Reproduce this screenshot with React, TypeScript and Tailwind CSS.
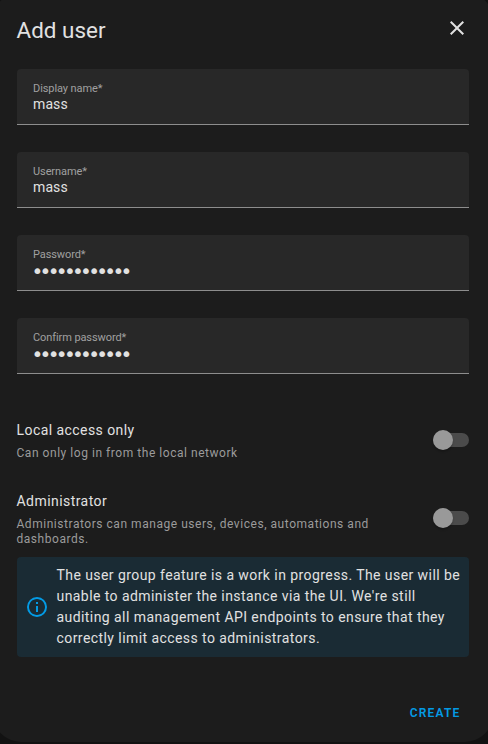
type FieldProps = { label: string; value: string; type?: "text" | "password" };

function Field({ label, value, type = "text" }: FieldProps) {
  const face =
    type === "password"
      ? "mt-px -ml-[1.5px] font-['DejaVu_Sans',sans-serif] text-[20px] tracking-[-3.7px]"
      : "text-sm tracking-[0.1px]";
  return (
    <label className="flex h-14 flex-col rounded-t border-b border-[#8d8d8d] bg-[#282828] px-4 pt-3">
      <span className="h-[15px] text-[11px] leading-[15px] tracking-[-0.09px] text-[#a0a0a0]">{label}</span>
      <input
        type={type}
        defaultValue={value}
        className={`h-4 w-full bg-transparent p-0 leading-4 text-[#e1e1e1] outline-none ${face}`}
      />
    </label>
  );
}

function Toggle() {
  return (
    <button type="button" role="switch" aria-checked="false" className="flex h-5 w-9 shrink-0 items-center">
      <span className="flex h-3.5 w-9 items-center rounded-full bg-[#4b4b4b]">
        <span className="size-5 shrink-0 rounded-full bg-[#999999] shadow-[0_2px_2px_rgba(0,0,0,0.2)]" />
      </span>
    </button>
  );
}

type RowProps = { title: string; text: string };

function SettingRow({ title, text }: RowProps) {
  return (
    <div className="flex items-center justify-between">
      <div className="-ml-[0.5px] w-[376px]">
        <div className="text-sm leading-5 tracking-[0.44px] text-[#e1e1e1]">{title}</div>
        <div className="mt-1.5 -mb-0.5 text-xs leading-[15px] tracking-[0.54px] text-[#9b9b9b]">{text}</div>
      </div>
      <Toggle />
    </div>
  );
}

export default function App() {
  return (
    <div className="h-[744px] w-[488px] overflow-hidden bg-[#121212] font-['Roboto','Liberation_Sans',sans-serif]">
      <main className="-mr-[5px] -ml-[7px] -mt-2 flex h-[750px] flex-col rounded-[28px] bg-[#1c1c1c] px-6 pt-2">
        <header className="flex h-[69px] items-start justify-between pt-[14px]">
          <h1 className="-ml-[0.5px] text-[22.4px] leading-8 tracking-[0.05px] text-[#e1e1e1]">Add user</h1>
          <button type="button" aria-label="Close" className="mt-0.5">
            <svg viewBox="0 0 24 24" className="size-6 fill-[#e1e1e1]">
              <path d="M19,6.41L17.59,5L12,10.59L6.41,5L5,6.41L10.59,12L5,17.59L6.41,19L12,13.41L17.59,19L19,17.59L13.41,12L19,6.41Z" />
            </svg>
          </button>
        </header>
        <div className="flex flex-col gap-[27px]">
          <Field label="Display name*" value="mass" />
          <Field label="Username*" value="mass" />
          <Field label="Password*" value="password1234" type="password" />
          <Field label="Confirm password*" value="password1234" type="password" />
        </div>
        <div className="mt-[46px] flex flex-col gap-8">
          <SettingRow title="Local access only" text="Can only log in from the local network" />
          <SettingRow title="Administrator" text="Administrators can manage users, devices, automations and dashboards." />
        </div>
        <aside className="mt-3 flex h-[100px] shrink-0 items-center rounded bg-[#1a2b34] pl-2">
          <svg viewBox="0 0 24 24" className="size-6 shrink-0 fill-[#039be5]">
            <path d="M11,9H13V7H11M12,20C7.59,20 4,16.41 4,12C4,7.59 7.59,4 12,4C16.41,4 20,7.59 20,12C20,16.41 16.41,20 12,20M12,2A10,10 0 0,0 2,12A10,10 0 0,0 12,22A10,10 0 0,0 22,12A10,10 0 0,0 12,2M11,17H13V11H11V17Z" />
          </svg>
          <p className="ml-[7.5px] text-sm leading-[21px] tracking-[0.43px] text-[#e1e1e1]">
            The user group feature is a work in progress. The user will be
            <br />
            unable to administer the instance via the UI. We're still
            <br />
            auditing all management API endpoints to ensure that they
            <br />
            correctly limit access to administrators.
          </p>
        </aside>
        <footer className="mt-[46px] flex justify-end pr-[8.5px]">
          <button type="button" className="text-xs leading-5 font-semibold tracking-[1.2px] text-[#039be5]">CREATE</button>
        </footer>
      </main>
    </div>
  );
}
